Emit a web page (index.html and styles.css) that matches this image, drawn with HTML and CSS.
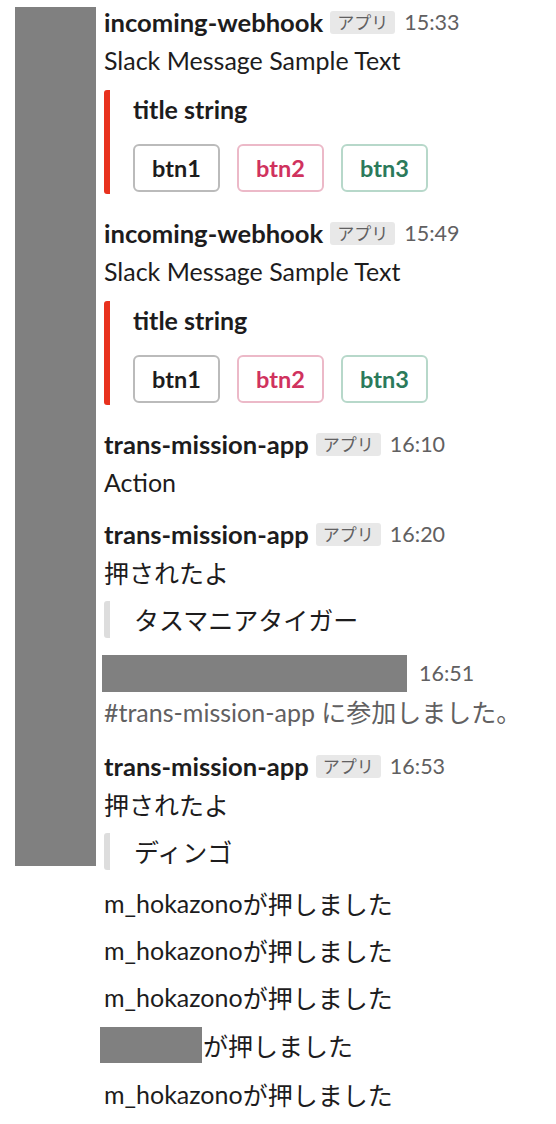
FILE: index.html
```html
<!DOCTYPE html>
<html>
<head>
<meta charset="utf-8">
<title>trans-mission-app</title>
<link rel="stylesheet" href="styles.css">
</head>
<body>
<div id="log">
	<div class="group">
		<div class="gutter"></div>
		<div class="msgs">

			<div class="msg">
				<div class="head"><span class="name">incoming-webhook</span><span class="badge">アプリ</span><span class="time">15:33</span></div>
				<div class="text">Slack Message Sample Text</div>
				<div class="attach">
					<div class="att-title">title string</div>
					<div class="btns">
						<span class="btn">btn1</span>
						<span class="btn danger">btn2</span>
						<span class="btn primary">btn3</span>
					</div>
				</div>
			</div>

			<div class="msg after-attach">
				<div class="head"><span class="name">incoming-webhook</span><span class="badge">アプリ</span><span class="time">15:49</span></div>
				<div class="text">Slack Message Sample Text</div>
				<div class="attach">
					<div class="att-title">title string</div>
					<div class="btns">
						<span class="btn">btn1</span>
						<span class="btn danger">btn2</span>
						<span class="btn primary">btn3</span>
					</div>
				</div>
			</div>

			<div class="msg after-attach">
				<div class="head"><span class="name">trans-mission-app</span><span class="badge">アプリ</span><span class="time">16:10</span></div>
				<div class="text">Action</div>
			</div>

			<div class="msg short">
				<div class="head"><span class="name">trans-mission-app</span><span class="badge">アプリ</span><span class="time">16:20</span></div>
				<div class="text ja">押されたよ</div>
				<div class="quote ja">タスマニアタイガー</div>
			</div>

			<div class="msg">
				<div class="head"><span class="hidden wide"></span><span class="time">16:51</span></div>
				<div class="text sys">#trans-mission-app <span class="ja">に参加しました。</span></div>
			</div>

			<div class="msg">
				<div class="head"><span class="name">trans-mission-app</span><span class="badge">アプリ</span><span class="time">16:53</span></div>
				<div class="text ja">押されたよ</div>
				<div class="quote ja">ディンゴ</div>
			</div>

		</div>
	</div>

	<div class="line first">m_hokazono<span class="ja">が押しました</span></div>
	<div class="line">m_hokazono<span class="ja">が押しました</span></div>
	<div class="line">m_hokazono<span class="ja">が押しました</span></div>
	<div class="line redact"><span class="hidden small"></span><span class="ja">が押しました</span></div>
	<div class="line redact-after">m_hokazono<span class="ja">が押しました</span></div>
</div>
</body>
</html>
```

FILE: styles.css
```css
html, body {
	margin: 0;
	padding: 0;
	background: #fff;
}
body {
	font-family: Lato, "Noto Sans CJK JP", sans-serif;
	font-size: 25px;
	color: #1d1c1d;
}
#log {
	padding: 3px 0 0 15px;
}
.group {
	display: flex;
	align-items: flex-start;
	gap: 8px;
}
.gutter {
	width: 81px;
	height: 859px;
	margin-top: 4px;
	background: #808080;
	flex: none;
}
.msgs {
	flex: 1;
}
.msg {
	margin-top: 16px;
}
.msg:first-child {
	margin-top: 0;
}
.msg.after-attach {
	margin-top: 20px;
}
.msg.short {
	margin-top: 14px;
}
.head {
	display: flex;
	align-items: center;
	height: 38px;
}
.name {
	font-size: 25.6px;
	font-weight: 700;
}
.badge {
	margin-left: 7px;
	padding: 0 7px;
	height: 23px;
	line-height: 23px;
	font-size: 17px;
	color: #616061;
	background: #e8e8e8;
	border-radius: 3px;
}
.time {
	margin-left: 9px;
	font-size: 21.5px;
	color: #616061;
}
.text {
	line-height: 38px;
}
.ja {
	font-family: "Noto Sans CJK JP", sans-serif;
}
.sys {
	color: #616061;
}
.attach {
	margin-top: 11px;
	border-left: 6px solid #e8321e;
	border-radius: 3px;
	padding: 0 0 2px 23px;
}
.att-title {
	font-weight: 700;
	line-height: 38px;
}
.btns {
	display: flex;
	gap: 17px;
	margin-top: 16px;
}
.btn {
	width: 83px;
	height: 44px;
	line-height: 44px;
	text-align: center;
	font-size: 23.5px;
	font-weight: 700;
	border: 2px solid #bbbbbb;
	border-radius: 6px;
}
.btn.danger {
	color: #d0325e;
	border-color: #ecb9c8;
}
.btn.primary {
	color: #2b7a5b;
	border-color: #b7d8ca;
}
.quote {
	margin-top: 10px;
	border-left: 6px solid #dddddd;
	border-radius: 3px;
	padding-left: 24px;
	line-height: 37px;
}
.hidden {
	display: inline-block;
	background: #808080;
}
.hidden.wide {
	width: 305px;
	height: 37px;
	margin-left: -2px;
}
.hidden.small {
	width: 102px;
	height: 36px;
	margin-left: -4px;
	margin-right: 1px;
}
.head .hidden + .time {
	margin-left: 12px;
}
.line {
	padding-left: 89px;
	line-height: 38px;
	margin-top: 9px;
	display: flex;
	align-items: center;
}
.line.first {
	margin-top: 14px;
}
.line.redact {
	margin-top: 10px;
}
.line.redact-after {
	margin-top: 11px;
}
```
